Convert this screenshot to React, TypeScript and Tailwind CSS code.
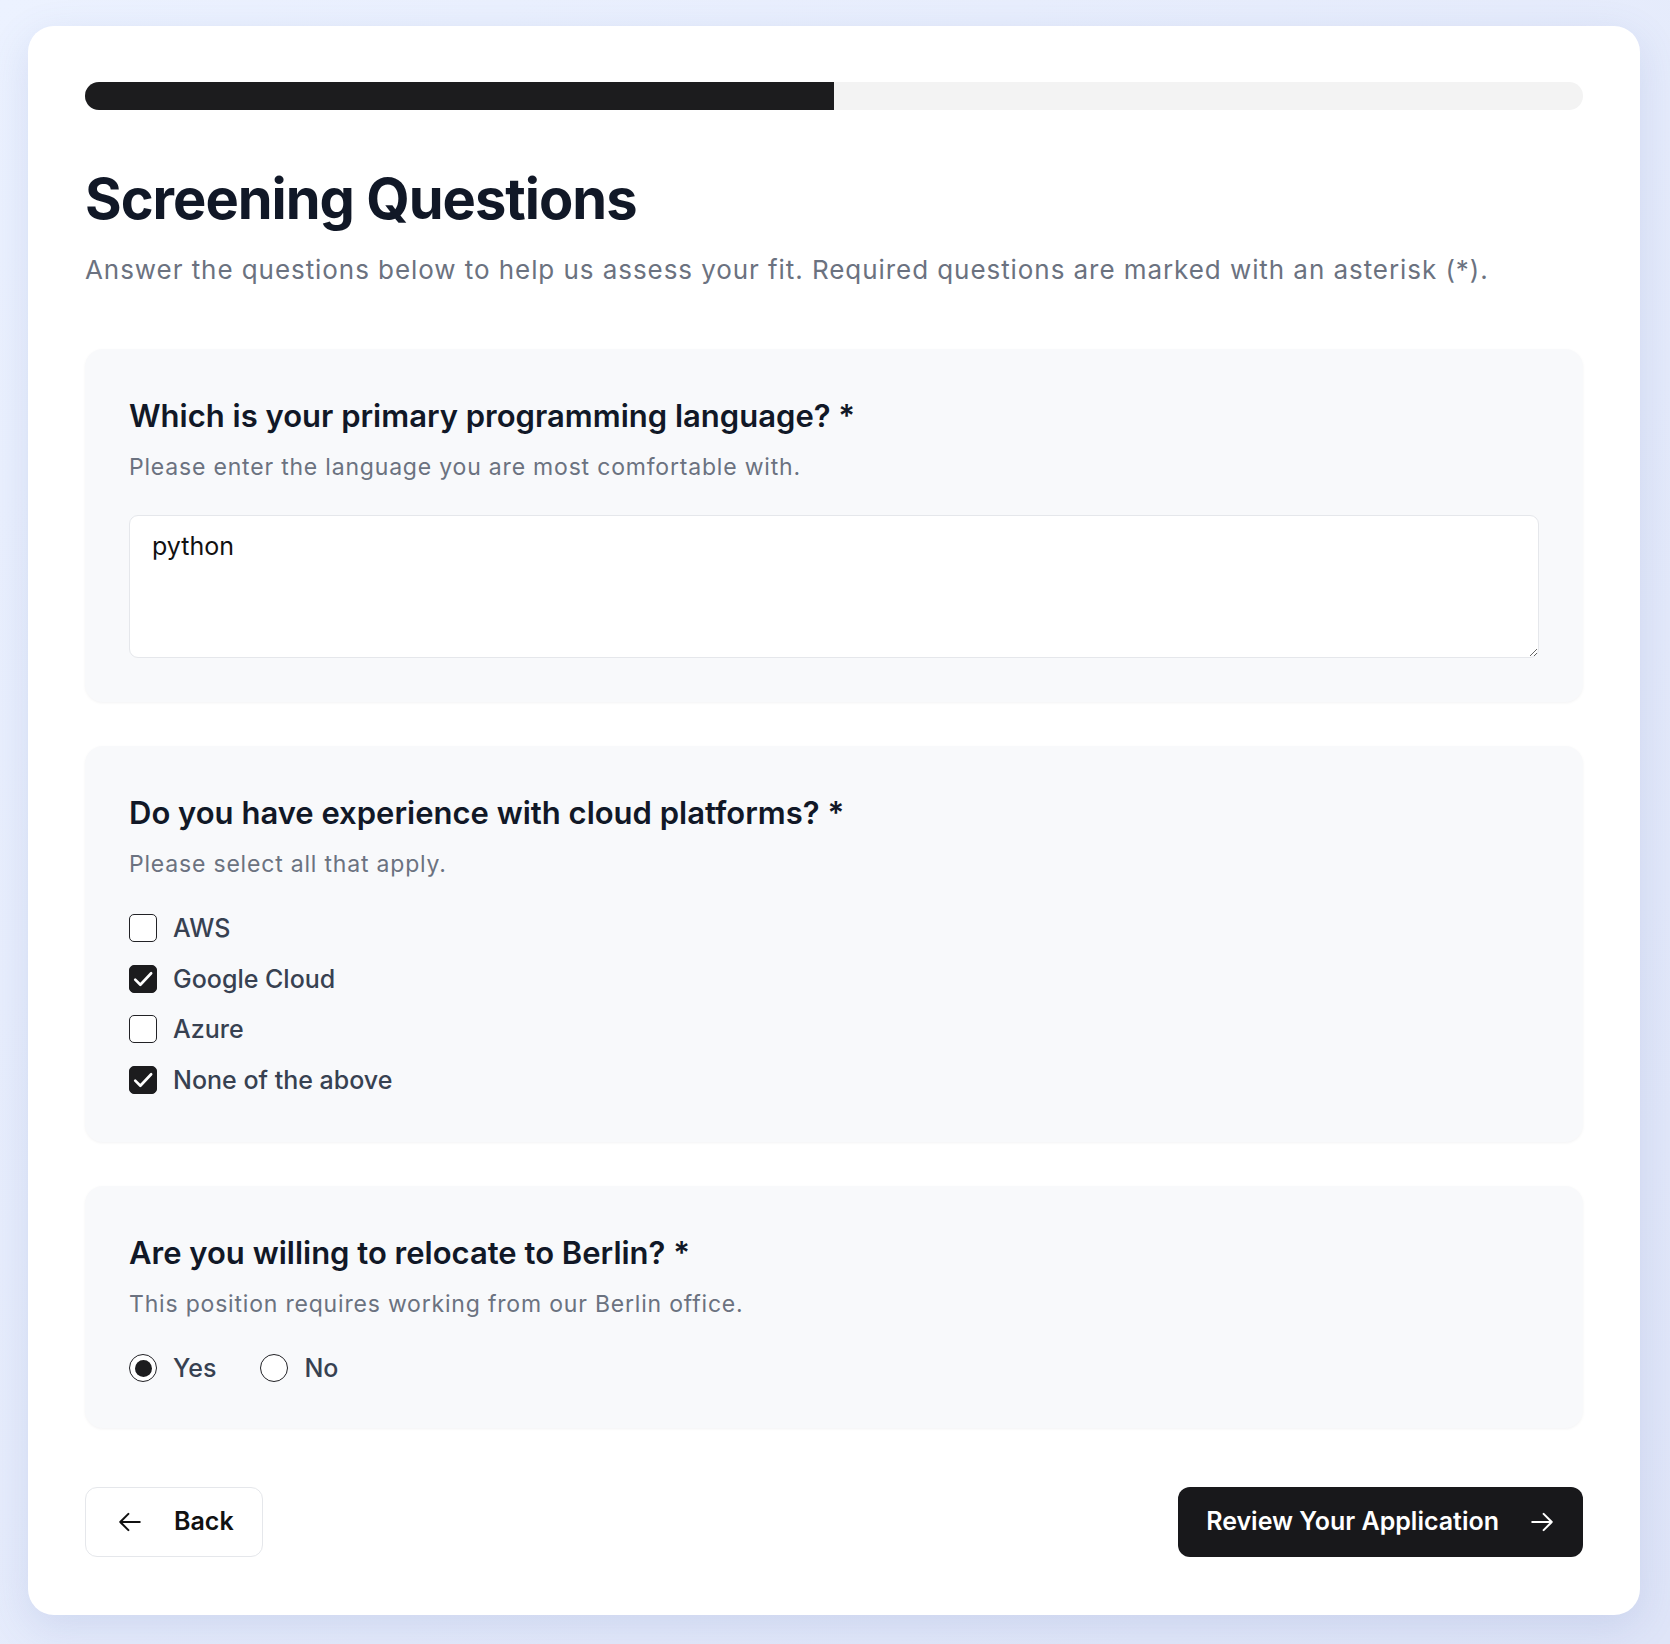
import { useState } from 'react';

/**
 * Screening questions step of the application flow: progress bar,
 * heading, three question cards (free text, multi-select, yes/no) and
 * the back / review footer.
 */

const CLOUD_OPTIONS = ['AWS', 'Google Cloud', 'Azure', 'None of the above'];

function ArrowIcon({ dir }: { dir: 'left' | 'right' }) {
  return (
    <svg
      width="26"
      height="26"
      viewBox="0 0 24 24"
      fill="none"
      stroke="currentColor"
      strokeWidth={1.9}
      strokeLinecap="round"
      strokeLinejoin="round"
      aria-hidden="true"
    >
      {dir === 'left' ? (
        <path d="M10.5 19.5 3 12m0 0 7.5-7.5M3 12h18" />
      ) : (
        <path d="M13.5 4.5 21 12m0 0-7.5 7.5M21 12H3" />
      )}
    </svg>
  );
}

function QuestionCard({
  title,
  hint,
  tight,
  children,
}: {
  title: string;
  hint: string;
  tight?: boolean;
  children: React.ReactNode;
}) {
  return (
    <section
      className={
        tight
          ? 'rounded-[18px] bg-[#f8f9fb] px-11 pt-11 pb-[42px] shadow-[0_1px_3px_rgba(15,23,42,0.05)]'
          : 'rounded-[18px] bg-[#f8f9fb] p-11 shadow-[0_1px_3px_rgba(15,23,42,0.05)]'
      }
    >
      <h2 className="text-[31px] leading-[46px] font-semibold text-[#111827]">
        {title} *
      </h2>
      <p className="mt-3 text-[23px] leading-[33px] tracking-[0.035em] text-[#6b7280]">{hint}</p>
      {children}
    </section>
  );
}

function Checkbox({
  label,
  checked,
  onToggle,
}: {
  label: string;
  checked: boolean;
  onToggle: () => void;
}) {
  return (
    <label className="flex items-center gap-4 h-9 cursor-pointer" onClick={onToggle}>
      <span
        className={
          checked
            ? 'w-7 h-7 rounded-[5px] bg-[#1c1c1e] border border-[#1c1c1e] flex items-center justify-center'
            : 'w-7 h-7 rounded-[5px] bg-white border border-[#222226]'
        }
      >
        {checked && (
          <svg width="24" height="24" viewBox="0 0 20 20" fill="none" aria-hidden="true">
            <path
              d="M3.5 10.5l4.3 4.3L16.8 5.2"
              stroke="white"
              strokeWidth={2.2}
              strokeLinecap="round"
              strokeLinejoin="round"
            />
          </svg>
        )}
      </span>
      <span className="text-[25px] leading-9 font-medium text-[#374151]">{label}</span>
    </label>
  );
}

function Radio({
  label,
  checked,
  onSelect,
}: {
  label: string;
  checked: boolean;
  onSelect: () => void;
}) {
  return (
    <label className="flex items-center gap-4 h-9 cursor-pointer" onClick={onSelect}>
      <span className="w-7 h-7 rounded-full border border-[#222226] bg-white flex items-center justify-center">
        {checked && <span className="w-[17px] h-[17px] rounded-full bg-[#1c1c1e]" />}
      </span>
      <span className="text-[25px] leading-9 font-medium text-[#374151]">{label}</span>
    </label>
  );
}

export default function App() {
  const [language, setLanguage] = useState('python');
  const [clouds, setClouds] = useState<string[]>(['Google Cloud', 'None of the above']);
  const [relocate, setRelocate] = useState<'yes' | 'no'>('yes');

  const toggleCloud = (c: string) =>
    setClouds((prev) => (prev.includes(c) ? prev.filter((x) => x !== c) : [...prev, c]));

  return (
    <div className="min-h-screen pl-[28px] pr-[30px] py-[26px] bg-linear-to-br from-[#ecf2ff] to-[#dfe5f8] font-['Inter','Noto_Sans',sans-serif]">
      <div className="rounded-[26px] bg-white px-[57px] pt-14 pb-[58px] shadow-[0_12px_40px_rgba(90,110,180,0.16)]">
        {/* progress: step 2 of 4 */}
        <div className="h-7 rounded-full bg-[#f3f3f3] overflow-hidden">
          <div className="h-full w-1/2 bg-[#1c1c1e]" />
        </div>

        <h1 className="mt-14 text-[56px] leading-[67px] font-bold tracking-[-0.018em] text-[#111827]">
          Screening Questions
        </h1>
        <p className="mt-[18px] text-[26px] leading-[37px] tracking-[0.036em] text-[#6b7280]">
          Answer the questions below to help us assess your fit. Required questions are marked
          with an asterisk (*).
        </p>

        <div className="mt-[61px] flex flex-col gap-11">
          <QuestionCard
            title="Which is your primary programming language?"
            hint="Please enter the language you are most comfortable with."
          >
            <textarea
              value={language}
              onChange={(e) => setLanguage(e.target.value)}
              className="mt-[31px] block w-full h-[143px] rounded-[9px] border border-[#e5e7eb] bg-white px-[22px] py-3 text-[25px] leading-[37px] text-[#111] outline-none"
            />
          </QuestionCard>

          <QuestionCard
            title="Do you have experience with cloud platforms?"
            hint="Please select all that apply."
          >
            <div className="mt-[29px] flex flex-col gap-[14.7px]">
              {CLOUD_OPTIONS.map((c) => (
                <Checkbox
                  key={c}
                  label={c}
                  checked={clouds.includes(c)}
                  onToggle={() => toggleCloud(c)}
                />
              ))}
            </div>
          </QuestionCard>

          <QuestionCard
            tight
            title="Are you willing to relocate to Berlin?"
            hint="This position requires working from our Berlin office."
          >
            <div className="mt-[29px] flex items-center gap-11">
              <Radio label="Yes" checked={relocate === 'yes'} onSelect={() => setRelocate('yes')} />
              <Radio label="No" checked={relocate === 'no'} onSelect={() => setRelocate('no')} />
            </div>
          </QuestionCard>
        </div>

        <div className="mt-[59px] flex items-center justify-between">
          <button
            type="button"
            className="h-[70px] flex items-center gap-[31px] pl-[31px] pr-[28px] rounded-[12px] border border-[#e5e7eb] bg-white text-[25px] font-semibold text-[#111]"
          >
            <ArrowIcon dir="left" />
            Back
          </button>
          <button
            type="button"
            className="h-[70px] flex items-center gap-[30px] px-[28px] rounded-[12px] bg-[#18181b] text-[25px] font-semibold text-white"
          >
            Review Your Application
            <ArrowIcon dir="right" />
          </button>
        </div>
      </div>
    </div>
  );
}
